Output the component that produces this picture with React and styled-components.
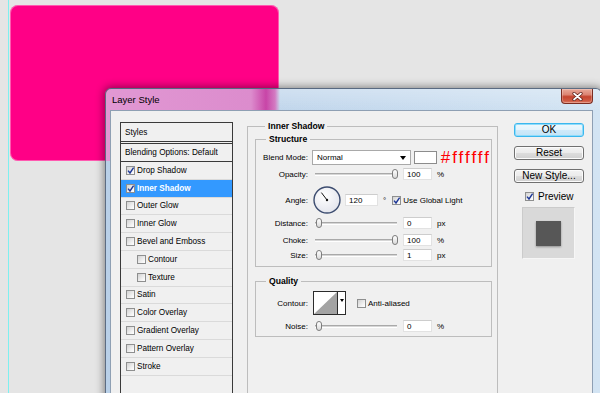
import React from "react";
import styled, { createGlobalStyle } from "styled-components";

const GlobalStyle = createGlobalStyle`
  html, body {
    margin: 0;
    padding: 0;
  }
  body {
    width: 600px;
    height: 393px;
    overflow: hidden;
    background: #e5e5e5;
    font-family: "Liberation Sans", Arial, sans-serif;
    color: #000;
  }
`;

const Desktop = styled.div`
  position: relative;
  width: 600px;
  height: 393px;
  overflow: hidden;
  background: #e5e5e5;
`;

const Guide = styled.div`
  position: absolute;
  left: 8px;
  top: 0;
  bottom: 0;
  width: 1px;
  background: #7ef0f0;
`;

const Shape = styled.div`
  position: absolute;
  left: 10px;
  top: 5px;
  width: 269px;
  height: 156px;
  border-radius: 8px;
  background: #ff0086;
  box-shadow: inset 0 0 0 1px rgba(255, 255, 255, 0.35);
`;

const Dialog = styled.div`
  position: absolute;
  left: 105px;
  top: 88px;
  width: 497px;
  height: 330px;
  box-sizing: border-box;
  border: 1px solid rgba(52, 68, 92, 0.75);
  border-radius: 6px 6px 0 0;
  background:
    linear-gradient(90deg, #e198d3 0, #dc8ccd 145px, #c845a7 160px, #d37ac2 169px, rgba(211, 122, 194, 0) 174px) 0 0 / 100% 72px no-repeat,
    linear-gradient(180deg, rgba(255, 255, 255, 0.25), rgba(255, 255, 255, 0) 21px),
    linear-gradient(90deg, #b9d0e8, #c6daee 55%, #d3e4f3);
  box-shadow: 0 0 8px 1px rgba(0, 0, 0, 0.45);
  display: flex;
  flex-direction: column;
`;

const TitleBar = styled.div`
  height: 21px;
  flex: none;
  display: flex;
  align-items: center;
  padding-left: 6px;
`;

const Title = styled.span`
  font-size: 9.5px;
  color: #000;
`;

const CloseButton = styled.div`
  align-self: flex-start;
  margin-left: auto;
  margin-right: 8px;
  width: 32px;
  height: 15px;
  box-sizing: border-box;
  border: 1px solid #7b2d22;
  border-top: none;
  border-radius: 0 0 4px 4px;
  background: linear-gradient(#e9a999 0%, #dc8573 40%, #c5452f 55%, #cf5b44 85%, #e0826a 100%);
  box-shadow: inset 0 0 0 1px rgba(255, 255, 255, 0.25);
  display: flex;
  align-items: center;
  justify-content: center;
`;

const Client = styled.div`
  flex: 1;
  margin: 0 8px 0 4px;
  border: 1px solid #8e9fb3;
  border-bottom: none;
  background: #f0f0f0;
  display: flex;
  align-items: flex-start;
`;

/* left list */

const StyleList = styled.div`
  margin: 11px 0 0 9px;
  width: 113px;
  height: 290px;
  box-sizing: border-box;
  border: 1px solid #3a3a3a;
  background: #f0f0f0;
  font-size: 8.2px;
  flex: none;
`;

const ListHead = styled.div`
  height: ${(p) => (p.$double ? 21 : 18)}px;
  box-sizing: border-box;
  display: flex;
  align-items: center;
  padding-left: 4px;
  border-bottom: ${(p) => (p.$double ? "3px double #3a3a3a" : "1px solid #3a3a3a")};
`;

const ListItem = styled.div`
  height: 17.8px;
  box-sizing: border-box;
  display: flex;
  align-items: center;
  gap: 2px;
  padding-left: ${(p) => (p.$indent ? 16 : 5)}px;
  border-bottom: 1px solid #dadada;
  background: ${(p) => (p.$active ? "#3399ff" : "transparent")};
  color: ${(p) => (p.$active ? "#fff" : "#000")};
  font-weight: ${(p) => (p.$active ? "bold" : "normal")};
`;

const Box = styled.span`
  position: relative;
  width: 9px;
  height: 9px;
  box-sizing: border-box;
  flex: none;
  border: 1px solid #8e8f8f;
  background: linear-gradient(135deg, #d2d2d2, #f4f4f4 70%, #fff);
  margin-left: ${(p) => p.$ml || 0}px;
`;

const Tick = styled.svg`
  position: absolute;
  left: 0;
  top: 0;
`;

function CheckBox({ on, ml }) {
  return (
    <Box $ml={ml}>
      {on && (
        <Tick width="8" height="8" viewBox="0 0 8 8">
          <polyline points="1,3.6 3,6 6.6,0.6" fill="none" stroke="#1d3797" strokeWidth="1.4" />
        </Tick>
      )}
    </Box>
  );
}

/* main panel */

const Main = styled.div`
  margin: 9px 0 0 14px;
  width: 251px;
  flex: none;
`;

const Group = styled.fieldset`
  box-sizing: border-box;
  width: ${(p) => p.$w}px;
  margin: ${(p) => p.$m || "0"};
  padding: ${(p) => p.$pad || "0"};
  border: 1px solid #bdbdbd;
  min-width: 0;
  ${(p) => p.$open && "border-bottom: none; min-height: 290px;"}
`;

const Legend = styled.legend`
  margin-left: 10px;
  padding: 0 3px;
  font-size: 8.6px;
  font-weight: bold;
  line-height: 12px;
`;

const Row = styled.div`
  display: flex;
  align-items: center;
  height: ${(p) => p.$h || 12}px;
  margin-top: ${(p) => p.$mt || 0}px;
  font-size: 8px;
`;

const Label = styled.span`
  width: 52px;
  margin-right: 4px;
  text-align: right;
  white-space: nowrap;
  flex: none;
`;

const Select = styled.div`
  width: 104px;
  height: 15px;
  box-sizing: border-box;
  border: 1px solid #a9a9a9;
  background: #fff;
  display: flex;
  align-items: center;
  padding: 0 4px;
`;

const SelectText = styled.span`
  flex: 1;
`;

const Swatch = styled.div`
  width: 24px;
  height: 13px;
  box-sizing: border-box;
  margin-left: 3px;
  border: 1px solid #8c8c8c;
  background: #fff;
`;

const Hex = styled.span`
  margin-left: 4px;
  color: #ff0000;
  font-size: 17px;
  line-height: 13px;
  letter-spacing: 2px;
`;

const Track = styled.div`
  position: relative;
  width: 82px;
  height: 1px;
  margin: 0 6px 0 3px;
  border-top: 1px solid #a9a9a9;
  border-bottom: 1px solid #fff;
  background: #d6d6d6;
`;

const Thumb = styled.span`
  position: absolute;
  top: -5px;
  left: ${(p) => (p.$end ? 77 : 1)}px;
  width: 6px;
  height: 10px;
  box-sizing: border-box;
  border: 1px solid #7d7d7d;
  border-radius: 3px;
  background: linear-gradient(#fff, #d9d9d9);
`;

function Slider({ end }) {
  return (
    <Track>
      <Thumb $end={end} />
    </Track>
  );
}

const Field = styled.span`
  width: ${(p) => p.$w || 29}px;
  height: 12px;
  box-sizing: border-box;
  margin-left: ${(p) => p.$ml || 0}px;
  background: #fff;
  border: 1px solid #e2e2e2;
  border-top-color: #cdcdcd;
  padding-left: 3px;
  display: inline-flex;
  align-items: center;
`;

const Unit = styled.span`
  margin-left: 5px;
`;

const Text = styled.span`
  margin-left: 2px;
`;

const Dial = styled.svg`
  margin-left: 1px;
  flex: none;
`;

const Picker = styled.div`
  margin-left: 1px;
  width: 33px;
  height: 24px;
  box-sizing: border-box;
  border: 1px solid #2b2b2b;
  background: #fff;
  display: flex;
`;

const PickerArrow = styled.div`
  flex: 1;
  border-left: 1px solid #2b2b2b;
  display: flex;
  justify-content: center;
  padding-top: 7px;
`;

/* right column */

const Side = styled.div`
  margin: 12px 0 0 16px;
  width: 70px;
  flex: none;
  display: flex;
  flex-direction: column;
`;

const Buttons = styled.div`
  display: flex;
  flex-direction: column;
  gap: 9px;
`;

const Button = styled.button`
  height: 14px;
  width: 70px;
  box-sizing: border-box;
  padding: 0;
  font-family: "Liberation Sans", Arial, sans-serif;
  font-size: 10px;
  line-height: 12px;
  color: #000;
  border-radius: 3px;
  border: 1px solid ${(p) => (p.$primary ? "#3ab7ee" : "#707070")};
  background: ${(p) =>
    p.$primary
      ? "linear-gradient(#eef8fd 0%, #e2f3fc 50%, #cfeafa 51%, #c3e4f7 100%)"
      : "linear-gradient(#f3f3f3 0%, #ebebeb 50%, #dddddd 51%, #d0d0d0 100%)"};
  box-shadow: inset 0 0 0 1px ${(p) => (p.$primary ? "#8fdcfb" : "#fbfbfb")};
`;

const PreviewToggle = styled.div`
  margin-top: 8px;
  height: 10px;
  padding-left: 11px;
  display: flex;
  align-items: center;
  gap: 4px;
  font-size: 10px;
`;

const PreviewBox = styled.div`
  margin: 6px 0 0 8px;
  width: 53px;
  height: 52px;
  box-sizing: border-box;
  border: 1px solid #f6f6f6;
  border-top-color: #cbcbcb;
  border-left-color: #cbcbcb;
  background: #d9d9d9;
  display: flex;
  align-items: center;
  justify-content: center;
`;

const PreviewSquare = styled.div`
  width: 25px;
  height: 25px;
  background: #575757;
  box-shadow: 0 1px 2px rgba(0, 0, 0, 0.35);
`;

const styleItems = [
  { name: "Drop Shadow", on: true },
  { name: "Inner Shadow", on: true, active: true },
  { name: "Outer Glow" },
  { name: "Inner Glow" },
  { name: "Bevel and Emboss" },
  { name: "Contour", indent: true },
  { name: "Texture", indent: true },
  { name: "Satin" },
  { name: "Color Overlay" },
  { name: "Gradient Overlay" },
  { name: "Pattern Overlay" },
  { name: "Stroke" },
];

const Arrow = () => (
  <svg width="6" height="4" viewBox="0 0 6 4">
    <polygon points="0,0 6,0 3,4" fill="#000" />
  </svg>
);

export default function App() {
  return (
    <>
      <GlobalStyle />
      <Desktop>
        <Guide />
        <Shape />
        <Dialog>
          <TitleBar>
            <Title>Layer Style</Title>
            <CloseButton>
              <svg width="11" height="9" viewBox="0 0 11 9">
                <path d="M2 1.5 L9 7.5 M9 1.5 L2 7.5" stroke="#5a1e16" strokeWidth="3.2" strokeLinecap="round" />
                <path d="M2 1.5 L9 7.5 M9 1.5 L2 7.5" stroke="#fff" strokeWidth="1.7" strokeLinecap="round" />
              </svg>
            </CloseButton>
          </TitleBar>
          <Client>
            <StyleList>
              <ListHead $double>Styles</ListHead>
              <ListHead>Blending Options: Default</ListHead>
              {styleItems.map((s) => (
                <ListItem key={s.name} $indent={s.indent} $active={s.active}>
                  <CheckBox on={s.on} />
                  <span>{s.name}</span>
                </ListItem>
              ))}
            </StyleList>

            <Main>
              <Group $w={251} $pad="1px 0 0 7px" $open>
                <Legend>Inner Shadow</Legend>
                <Group $w={237} $pad="5px 0 5px 0">
                  <Legend>Structure</Legend>
                  <Row $h={15}>
                    <Label>Blend Mode:</Label>
                    <Select>
                      <SelectText>Normal</SelectText>
                      <Arrow />
                    </Select>
                    <Swatch />
                    <Hex>#ffffff</Hex>
                  </Row>
                  <Row $mt={3}>
                    <Label>Opacity:</Label>
                    <Slider end />
                    <Field>100</Field>
                    <Unit>%</Unit>
                  </Row>
                  <Row $h={28} $mt={6}>
                    <Label>Angle:</Label>
                    <Dial width="28" height="28" viewBox="0 0 28 28">
                      <defs>
                        <radialGradient id="dialFill" cx="40%" cy="35%" r="70%">
                          <stop offset="0" stopColor="#ffffff" />
                          <stop offset="1" stopColor="#e2e4ec" />
                        </radialGradient>
                      </defs>
                      <circle cx="14" cy="14" r="13" fill="url(#dialFill)" stroke="#3d4d70" strokeWidth="1.4" />
                      <line x1="14" y1="14" x2="8.4" y2="6.6" stroke="#111" strokeWidth="1" />
                      <circle cx="14" cy="14" r="1.2" fill="#111" />
                    </Dial>
                    <Field $w={33} $ml={4}>120</Field>
                    <Unit>°</Unit>
                    <CheckBox on ml={6} />
                    <Text>Use Global Light</Text>
                  </Row>
                  <Row $mt={3}>
                    <Label>Distance:</Label>
                    <Slider />
                    <Field>0</Field>
                    <Unit>px</Unit>
                  </Row>
                  <Row $mt={5}>
                    <Label>Choke:</Label>
                    <Slider end />
                    <Field>100</Field>
                    <Unit>%</Unit>
                  </Row>
                  <Row $mt={3}>
                    <Label>Size:</Label>
                    <Slider />
                    <Field>1</Field>
                    <Unit>px</Unit>
                  </Row>
                </Group>

                <Group $w={237} $m="8px 0 0 0" $pad="4px 0 4px 0">
                  <Legend>Quality</Legend>
                  <Row $h={24}>
                    <Label>Contour:</Label>
                    <Picker>
                      <svg width="23" height="22" viewBox="0 0 23 22">
                        <polygon points="0,22 23,0 23,22" fill="#a3a3a3" />
                      </svg>
                      <PickerArrow>
                        <svg width="4" height="3" viewBox="0 0 4 3">
                          <polygon points="0,0 4,0 2,3" fill="#000" />
                        </svg>
                      </PickerArrow>
                    </Picker>
                    <CheckBox ml={11} />
                    <Text>Anti-aliased</Text>
                  </Row>
                  <Row $mt={5}>
                    <Label>Noise:</Label>
                    <Slider />
                    <Field>0</Field>
                    <Unit>%</Unit>
                  </Row>
                </Group>
              </Group>
            </Main>

            <Side>
              <Buttons>
                <Button $primary>OK</Button>
                <Button>Reset</Button>
                <Button>New Style...</Button>
              </Buttons>
              <PreviewToggle>
                <CheckBox on />
                <span>Preview</span>
              </PreviewToggle>
              <PreviewBox>
                <PreviewSquare />
              </PreviewBox>
            </Side>
          </Client>
        </Dialog>
      </Desktop>
    </>
  );
}
